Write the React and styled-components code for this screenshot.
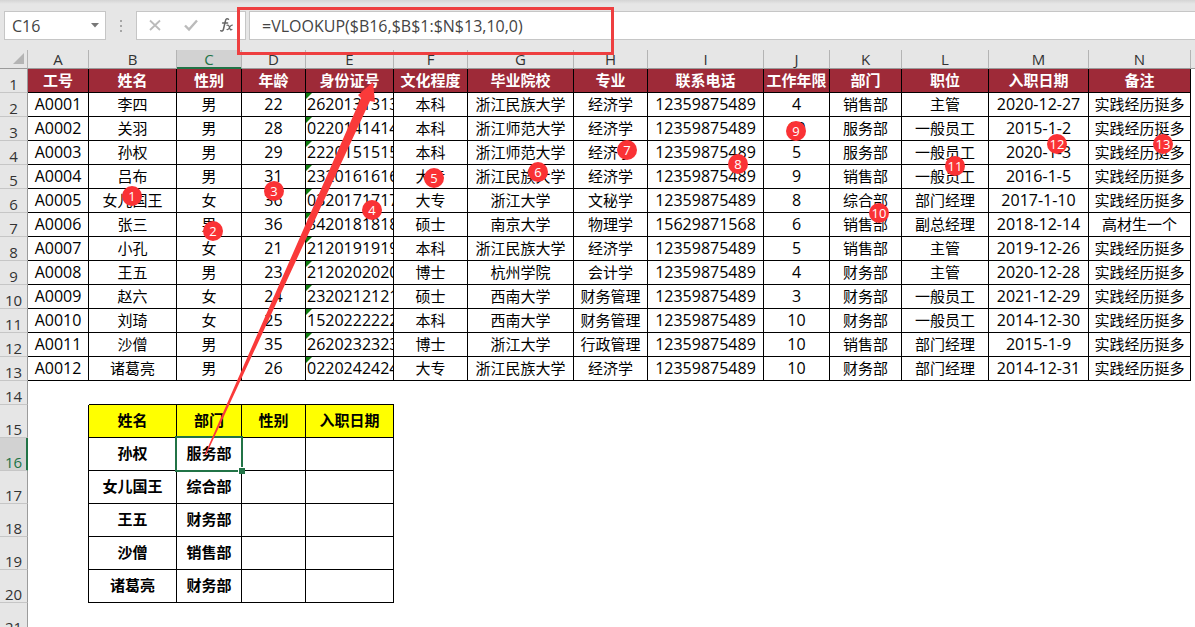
import React, { useState } from 'react';
import styled, { createGlobalStyle, css } from 'styled-components';

const GlobalStyle = createGlobalStyle`
  * {
    box-sizing: border-box;
  }

  body {
    margin: 0;
    background: #fff;
    overflow: hidden;
    font-family: 'Open Sans', 'Noto Sans CJK SC', sans-serif;
  }
`;

const Page = styled.main`
  height: 100vh;
  overflow: hidden;
  position: relative;
  background: #fff;
`;

const FormulaBar = styled.header`
  display: flex;
  height: 50px;
  padding: 11px 0 10px 4px;
  background: linear-gradient(#d4d4d4, #e6e6e6 4px);
`;

const NameBox = styled.label`
  display: flex;
  align-items: center;
  width: 102px;
  padding-right: 6px;
  border: 1px solid #c6c6c6;
  background: #fff;

  input {
    flex: 1;
    min-width: 0;
    padding: 0 0 0 7px;
    border: 0;
    outline: 0;
    background: none;
    color: #444;
    font: 16px 'Open Sans', sans-serif;
  }
`;

const Grip = styled.svg`
  width: 30px;
  height: 29px;
`;

const Tools = styled.div`
  display: flex;
  align-items: center;
  justify-content: space-between;
  width: 110px;
  padding: 0 10px 2px;
  border: 1px solid #c6c6c6;
  background: #fff;
`;

const ToolButton = styled.button`
  display: flex;
  padding: 0;
  border: 0;
  background: none;
`;

const FormulaInput = styled.input`
  flex: 1;
  min-width: 0;
  margin-left: 3px;
  padding: 0 12px;
  border: 1px solid #c6c6c6;
  border-right: 0;
  outline: 0;
  background: #fff;
  color: #444;
  font: 16px 'Open Sans', sans-serif;
`;

const Sheet = styled.table`
  width: 100%;
  table-layout: fixed;
  border-collapse: separate;
  border-spacing: 0;
`;

const Col = styled.col`
  width: ${props => (props.$width ? `${props.$width}px` : 'auto')};
`;

const Row = styled.tr`
  height: ${props => props.$height}px;
`;

const headActive = css`
  background: #d2d2d2;
  color: #217346;
`;

const ColHead = styled.th`
  height: 19px;
  padding: 0;
  border-right: 1px solid #b4b4b4;
  border-bottom: 1px solid #9b9b9b;
  background: #e6e6e6;
  color: #333;
  font-size: 15px;
  font-weight: 400;
  line-height: 18px;
  ${props => props.$active && headActive}
  ${props => props.$active && 'border-bottom-color: #217346; box-shadow: inset 0 -1px #217346;'}

  &:last-child {
    border-right: 0;
  }
`;

const Corner = styled(ColHead)`
  svg {
    display: block;
    margin-left: 12px;
  }
`;

const RowHead = styled.th`
  padding: 0;
  border-right: 1px solid #9b9b9b;
  border-bottom: 1px solid #c6c6c6;
  background: #e6e6e6;
  color: #333;
  font-size: 15px;
  font-weight: 400;
  line-height: 16px;
  vertical-align: bottom;
  ${props => props.$active && headActive}
  ${props => props.$active && 'border-right-color: #217346; box-shadow: inset -1px 0 #217346;'}
`;

const Cell = styled.td`
  position: relative;
  padding: 0 0 2px;
  overflow: hidden;
  text-align: center;
  white-space: nowrap;
  color: #000;
  font-size: 15px;
  line-height: 20px;
`;

const DataCell = styled(Cell)`
  border-right: 1px solid #000;
  border-bottom: 1px solid #000;
  font-size: ${props => (props.$latin ? 16 : 15)}px;
`;

const TitleCell = styled(DataCell)`
  background: #9e2a38;
  color: #fff;
  font-weight: 700;
`;

/* numbers stored as text get the green corner */
const IdCell = styled(DataCell)`
  padding-left: 1px;
  text-align: left;
  text-overflow: clip;

  &::before {
    content: '';
    position: absolute;
    top: 0;
    left: 0;
    border-top: 6px solid #107c10;
    border-right: 6px solid transparent;
  }
`;

const LookupCell = styled(DataCell)`
  font-weight: 700;
  background: ${props => (props.$title ? '#ff0' : '#fff')};
`;

const EdgeCell = styled(Cell)`
  ${props => props.$right && 'border-right: 1px solid #000;'}
  ${props => props.$bottom && 'border-bottom: 1px solid #000;'}
`;

const SelectedCell = styled(LookupCell)`
  overflow: visible;
  z-index: 1;

  &::before {
    content: '';
    position: absolute;
    inset: -2px;
    border: 2px solid #217346;
  }

  &::after {
    content: '';
    position: absolute;
    right: -4px;
    bottom: -4px;
    width: 6px;
    height: 6px;
    border: 1px solid #fff;
    border-width: 1px 0 0 1px;
    background: #217346;
  }
`;

const FormulaFrame = styled.div`
  position: absolute;
  left: 237px;
  top: 7px;
  width: 377px;
  height: 48px;
  border: 3px solid #ee3f40;
  pointer-events: none;
`;

const Arrow = styled.svg`
  position: absolute;
  left: 200px;
  top: 80px;
  z-index: 2;
  pointer-events: none;
`;

const Marker = styled.span`
  position: absolute;
  left: ${props => props.$x - 10}px;
  top: ${props => props.$y - 10}px;
  width: 20px;
  height: 20px;
  border-radius: 50%;
  background: #fa3235;
  color: #fff;
  font-size: 13px;
  line-height: 20px;
  text-align: center;
`;

const columns = [
  ['A', 61], ['B', 88], ['C', 65], ['D', 64], ['E', 88], ['F', 74], ['G', 106],
  ['H', 74], ['I', 116], ['J', 66], ['K', 72], ['L', 87], ['M', 100], ['N', 102],
];

const titles = [
  '工号', '姓名', '性别', '年龄', '身份证号', '文化程度', '毕业院校',
  '专业', '联系电话', '工作年限', '部门', '职位', '入职日期', '备注',
];

const staff = [
  ['A0001', '李四', '男', '22', '2620131313', '本科', '浙江民族大学', '经济学', '12359875489', '4', '销售部', '主管', '2020-12-27', '实践经历挺多'],
  ['A0002', '关羽', '男', '28', '0220141414', '本科', '浙江师范大学', '经济学', '12359875489', '10', '服务部', '一般员工', '2015-1-2', '实践经历挺多'],
  ['A0003', '孙权', '男', '29', '2220151515', '本科', '浙江师范大学', '经济学', '12359875489', '5', '服务部', '一般员工', '2020-1-3', '实践经历挺多'],
  ['A0004', '吕布', '男', '31', '2320161616', '大专', '浙江民族大学', '经济学', '12359875489', '9', '销售部', '一般员工', '2016-1-5', '实践经历挺多'],
  ['A0005', '女儿国王', '女', '36', '0320171717', '大专', '浙江大学', '文秘学', '12359875489', '8', '综合部', '部门经理', '2017-1-10', '实践经历挺多'],
  ['A0006', '张三', '男', '36', '3420181818', '硕士', '南京大学', '物理学', '15629871568', '6', '销售部', '副总经理', '2018-12-14', '高材生一个'],
  ['A0007', '小孔', '女', '21', '2120191919', '本科', '浙江民族大学', '经济学', '12359875489', '5', '销售部', '主管', '2019-12-26', '实践经历挺多'],
  ['A0008', '王五', '男', '23', '2120202020', '博士', '杭州学院', '会计学', '12359875489', '4', '财务部', '主管', '2020-12-28', '实践经历挺多'],
  ['A0009', '赵六', '女', '24', '2320212121', '硕士', '西南大学', '财务管理', '12359875489', '3', '财务部', '一般员工', '2021-12-29', '实践经历挺多'],
  ['A0010', '刘琦', '女', '25', '1520222222', '本科', '西南大学', '财务管理', '12359875489', '10', '财务部', '一般员工', '2014-12-30', '实践经历挺多'],
  ['A0011', '沙僧', '男', '35', '2620232323', '博士', '浙江大学', '行政管理', '12359875489', '10', '销售部', '部门经理', '2015-1-9', '实践经历挺多'],
  ['A0012', '诸葛亮', '男', '26', '0220242424', '大专', '浙江民族大学', '经济学', '12359875489', '10', '财务部', '部门经理', '2014-12-31', '实践经历挺多'],
];

const lookup = [
  ['姓名', '部门', '性别', '入职日期'],
  ['孙权', '服务部', '', ''],
  ['女儿国王', '综合部', '', ''],
  ['王五', '财务部', '', ''],
  ['沙僧', '销售部', '', ''],
  ['诸葛亮', '财务部', '', ''],
];

const markers = [
  [132, 196], [213, 231], [274, 191], [372, 210], [434, 178], [538, 172], [627, 150],
  [738, 164], [796, 131], [879, 213], [955, 166], [1057, 144], [1163, 144],
];

const isLatin = text => /^[A-Z0-9-]+$/.test(text);

const StaffRow = ({ number, values }) => (
  <Row $height={24}>
    <RowHead scope="row">{number}</RowHead>
    {values.map((value, i) => {
      const Part = i === 4 ? IdCell : DataCell;
      return <Part key={i} $latin={isLatin(value)}>{value}</Part>;
    })}
    <Cell />
  </Row>
);

const LookupRow = ({ number, values }) => {
  const isTitle = number === 15;
  const active = number === 16;

  return (
    <Row $height={33}>
      <RowHead scope="row" $active={active}>{number}</RowHead>
      <EdgeCell $right />
      {values.map((value, i) => {
        const Part = active && i === 1 ? SelectedCell : LookupCell;
        return <Part key={i} $title={isTitle}>{value}</Part>;
      })}
      <Cell colSpan={10} />
    </Row>
  );
};

const App = () => {
  const [cellName, setCellName] = useState('C16');
  const [formula, setFormula] = useState('=VLOOKUP($B16,$B$1:$N$13,10,0)');

  return (
    <Page>
      <GlobalStyle />
      <FormulaBar>
        <NameBox>
          <input
            aria-label="Name box"
            value={cellName}
            onChange={e => setCellName(e.target.value)}
          />
          <svg width="8" height="5" viewBox="0 0 8 5">
            <path d="M0 0h8L4 4.5z" fill="#777" />
          </svg>
        </NameBox>
        <Grip viewBox="0 0 30 29">
          <path d="M14 9h2v2h-2zM14 14h2v2h-2zM14 19h2v2h-2z" fill="#a6a6a6" />
        </Grip>
        <Tools>
          <ToolButton aria-label="Cancel">
            <svg width="16" height="16" viewBox="0 0 16 16" fill="none" stroke="#bbb" strokeWidth="1.8">
              <path d="M3 3.5l10 9.5M13 3.5L3 13" />
            </svg>
          </ToolButton>
          <ToolButton aria-label="Enter">
            <svg width="16" height="16" viewBox="0 0 16 16" fill="none" stroke="#bbb" strokeWidth="2.4">
              <path d="M2 8.5l4 4L14 3.5" />
            </svg>
          </ToolButton>
          <ToolButton aria-label="Insert function">
            <svg width="16" height="16" viewBox="0 0 16 16" fill="none" stroke="#666" strokeLinecap="round">
              <path d="M9.5 2.3C8 1 6.8 2 6.4 4L4.500 12c-.4 1.900-1.500 2.600-2.800 1.700M3.600 6h5" strokeWidth="1.5" />
              <path d="M8 8.300c1.500-.8 2 .4 2.500 2.200s1 2.900 2.400 2M13.300 8.200c-1.500-.3-2.500 1.800-3.200 3-.6 1-1.200 1.500-2.100 1.300" strokeWidth="1.200" />
            </svg>
          </ToolButton>
        </Tools>
        <FormulaInput
          aria-label="Formula"
          value={formula}
          onChange={e => setFormula(e.target.value)}
        />
      </FormulaBar>

      <Sheet>
        <colgroup>
          <Col $width={28} />
          {columns.map(([name, width]) => <Col key={name} $width={width} />)}
          <Col />
        </colgroup>
        <thead>
          <tr>
            <Corner>
              <svg width="13" height="12" viewBox="0 0 13 12">
                <path d="M12 0v11H1z" fill="#b4b4b4" />
              </svg>
            </Corner>
            {columns.map(([name]) => (
              <ColHead key={name} scope="col" $active={name === 'C'}>{name}</ColHead>
            ))}
            <ColHead />
          </tr>
        </thead>
        <tbody>
          <Row $height={24}>
            <RowHead scope="row">1</RowHead>
            {titles.map(title => <TitleCell key={title}>{title}</TitleCell>)}
            <Cell />
          </Row>
          {staff.map((values, i) => (
            <StaffRow key={values[0]} number={i + 2} values={values} />
          ))}
          <Row $height={24}>
            <RowHead scope="row">14</RowHead>
            <Cell />
            <EdgeCell $bottom colSpan={4} />
            <Cell colSpan={10} />
          </Row>
          {lookup.map((values, i) => (
            <LookupRow key={values[0]} number={i + 15} values={values} />
          ))}
          <Row $height={33}>
            <RowHead scope="row">21</RowHead>
            <Cell colSpan={15} />
          </Row>
        </tbody>
      </Sheet>

      <FormulaFrame />
      <Arrow width="180" height="380" viewBox="200 80 180 380">
        <path d="M204.500 455L361 98l-3-3L373 82l2 20-5-1L206 455z" fill="#fa3a3a" />
      </Arrow>
      {markers.map(([x, y], i) => (
        <Marker key={i} $x={x} $y={y}>{i + 1}</Marker>
      ))}
    </Page>
  );
};

export default App;
